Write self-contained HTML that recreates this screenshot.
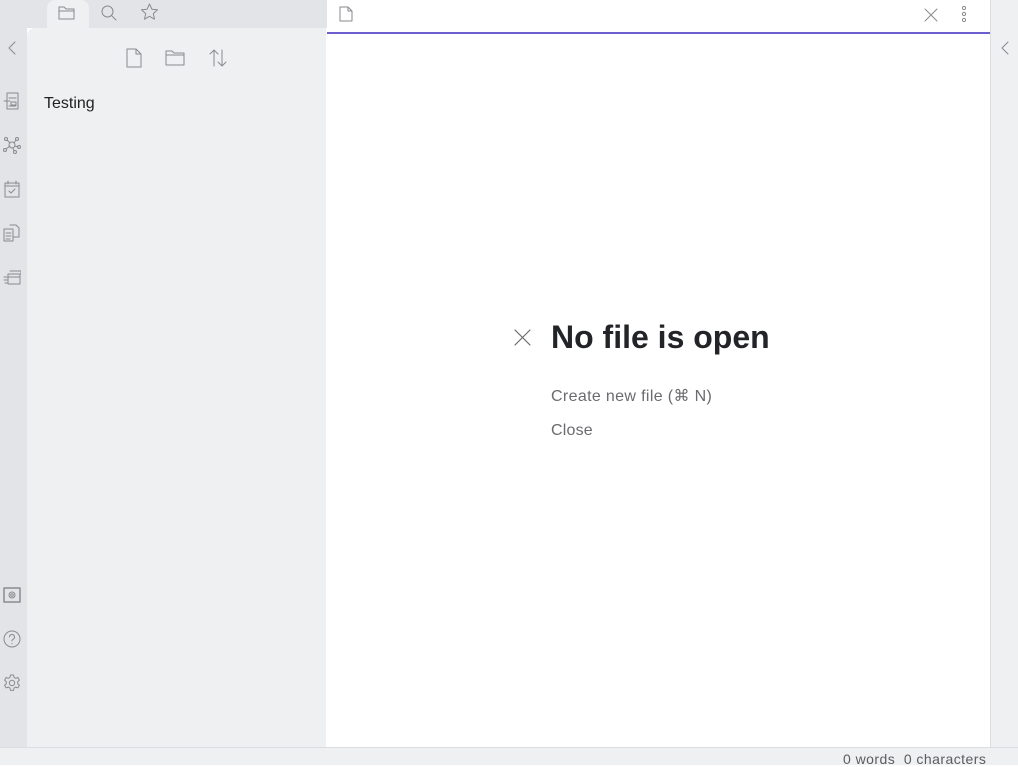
<!DOCTYPE html>
<html><head><meta charset="utf-8"><style>
*{margin:0;padding:0;box-sizing:border-box}
body{width:1018px;height:765px;overflow:hidden;background:#fff;font-family:"Liberation Sans",sans-serif;position:relative}
.abs{position:absolute}
svg{position:absolute;fill:none;stroke:#8a8a8f;stroke-width:1;stroke-linecap:round;stroke-linejoin:round}
</style></head><body>
<div class="abs" style="left:0;top:0;width:27px;height:748px;background:#e3e4e8"></div>
<div class="abs" style="left:27px;top:0;width:300px;height:28px;background:#e3e4e8"></div>
<div class="abs" style="left:27px;top:28px;width:299px;height:720px;background:#eff0f2;border-top-left-radius:8px"></div>
<div class="abs" style="left:47px;top:0;width:42px;height:30px;background:#eff0f2;border-radius:8px 8px 0 0"></div>
<div class="abs" style="left:327px;top:32px;width:664px;height:2px;background:#6e5fcf"></div>
<div class="abs" style="left:990px;top:0;width:28px;height:748px;background:#eff0f2;border-left:1px solid #dcdde0"></div>
<div class="abs" style="left:0;top:747px;width:1018px;height:18px;background:#eff0f2;border-top:1px solid #dcdde0"></div>
<div class="abs" style="left:843px;top:751px;font-size:14px;color:#5c5c60;white-space:pre;letter-spacing:0.45px">0 words  0 characters</div>

<svg style="left:58px;top:5px" width="18" height="16" viewBox="0 0 18 16"><path d="M1 2h5l2 2h8v10H1z M1 6h15"/></svg>
<svg style="left:100px;top:4px" width="18" height="18" viewBox="0 0 18 18"><circle cx="7.5" cy="7.5" r="5.5"/><path d="M11.5 11.5l4.5 4.5"/></svg>
<svg style="left:140px;top:3px" width="19" height="18" viewBox="0 0 19 18"><path d="M9.5 1l2.4 5.2 5.6.6-4.2 3.8 1.2 5.6-5-2.9-5 2.9 1.2-5.6L1.5 6.8l5.6-.6z"/></svg>
<svg style="left:125px;top:48px" width="18" height="20" viewBox="0 0 18 20"><path d="M2 1h9l5 5v13H2z M11 1v5h5"/></svg>
<svg style="left:165px;top:49px" width="22" height="18" viewBox="0 0 22 18"><path d="M1 2h6l2 2h10v12H1z M1 6h18"/></svg>
<svg style="left:208px;top:48px" width="20" height="20" viewBox="0 0 20 20"><path d="M6 18V2M2 6l4-4 4 4M14 2v16M10 14l4 4 4-4"/></svg>
<div class="abs" style="left:44px;top:95px;font-size:16px;color:#222">Testing</div>

<svg style="left:6px;top:40px" width="14" height="16" viewBox="0 0 14 16"><path d="M9 2L3 8l6 6"/></svg>
<svg style="left:3px;top:92px" width="18" height="18" viewBox="0 0 18 18"><path d="M4 1h11v16H4z M1 9h6M6 6h7M8 10h5v3H8zM6 14h7"/></svg>
<svg style="left:3px;top:136px" width="18" height="18" viewBox="0 0 18 18"><circle cx="9" cy="9" r="3"/><circle cx="3" cy="3" r="1.5"/><circle cx="14" cy="3" r="1.5"/><circle cx="2" cy="14" r="1.5"/><circle cx="16" cy="11" r="1.5"/><circle cx="12" cy="16" r="1.5"/><path d="M4 4l3 3M13 4l-2 3M3 13l4-3M12 10l3 1M11 15l-1-3"/></svg>
<svg style="left:3px;top:180px" width="18" height="18" viewBox="0 0 18 18"><path d="M2 3h14v14H2zM2 6h14M5 1v3M13 1v3M6 11l2 2 4-4"/></svg>
<svg style="left:3px;top:224px" width="18" height="18" viewBox="0 0 18 18"><path d="M1 5h9v12H1zM7 1h6l3 3v9h-6M3 9h5M3 12h5M3 15h4"/></svg>
<svg style="left:3px;top:268px" width="18" height="18" viewBox="0 0 18 18"><path d="M5 6h12v10H5zM7 3h11v3M1 9h3M1 12h3M2 15h2M5 9h12"/></svg>
<svg style="left:3px;top:586px" width="18" height="18" viewBox="0 0 18 18"><path d="M1 2h16v14H1z" stroke-width="1.5"/><circle cx="9" cy="9" r="3"/><circle cx="9" cy="9" r="1.3"/></svg>
<svg style="left:3px;top:630px" width="18" height="18" viewBox="0 0 18 18"><circle cx="9" cy="9" r="8"/><path d="M6.5 7a2.5 2.5 0 1 1 3.5 2.3c-.7.4-1 .9-1 1.7M9 13.5v.3"/></svg>
<svg style="left:3px;top:674px" width="18" height="18" viewBox="0 0 18 18"><path d="M7.5 1h3l.5 2.3 1.7 1 2.2-.8 1.5 2.6-1.7 1.6v2l1.7 1.6-1.5 2.6-2.2-.8-1.7 1-.5 2.3h-3l-.5-2.3-1.7-1-2.2.8-1.5-2.6 1.7-1.6v-2L1.6 6.1l1.5-2.6 2.2.8 1.7-1z"/><circle cx="9" cy="9" r="2.7"/></svg>

<svg style="left:339px;top:6px" width="14" height="16" viewBox="0 0 14 16"><path d="M1 1h8l4 4v10H1zM9 1v4h4"/></svg>
<svg style="left:923px;top:7px" width="16" height="16" viewBox="0 0 16 16"><path d="M2 2l12 12M14 2L2 14"/></svg>
<svg style="left:960px;top:5px" width="8" height="18" viewBox="0 0 8 18"><circle cx="4" cy="3" r="1.6"/><circle cx="4" cy="9" r="1.6"/><circle cx="4" cy="15" r="1.6"/></svg>
<svg style="left:999px;top:40px" width="14" height="16" viewBox="0 0 14 16"><path d="M9 2L3 8l6 6"/></svg>

<svg style="left:513px;top:328px" width="19" height="19" viewBox="0 0 19 19"><path d="M2 2l15 15M17 2L2 17" stroke="#6a6a6f" stroke-width="1.2"/></svg>
<div class="abs" style="left:551px;top:319px;font-size:32px;font-weight:bold;color:#222428;letter-spacing:0px">No file is open</div>
<div class="abs" style="left:551px;top:386px;font-size:16px;color:#6a6a6f;letter-spacing:0.35px">Create new file (⌘ N)</div>
<div class="abs" style="left:551px;top:422px;font-size:16px;color:#6a6a6f;letter-spacing:0.2px">Close</div>
</body></html>
